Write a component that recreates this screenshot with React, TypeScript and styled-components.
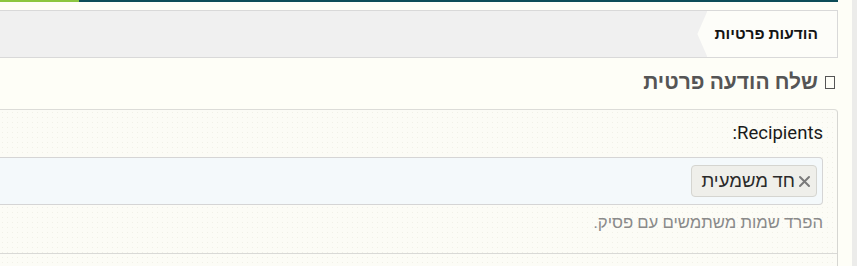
import styled, { createGlobalStyle } from "styled-components";

const GlobalStyle = createGlobalStyle`
  html, body {
    margin: 0;
    padding: 0;
    background: #fefef7;
  }
  body {
    font-family: Roboto, "Liberation Sans", "Noto Sans", sans-serif;
    overflow: hidden;
  }
`;

const Page = styled.div`
  width: 857px;
  height: 266px;
  direction: rtl;
  display: flex;
  overflow: hidden;
`;

const SideStrip = styled.div`
  width: 5px;
  flex: none;
  background: #ececea;
`;

const Main = styled.div`
  width: 838px;
  margin-right: 14px;
  flex: none;
  display: flex;
  flex-direction: column;
`;

const TopBar = styled.div`
  height: 2px;
  display: flex;
  background: #0d4c58;
  direction: ltr;
`;

const TopBarAccent = styled.div`
  width: 79px;
  background: #8cc63f;
`;

const Breadcrumbs = styled.div`
  margin-top: 8px;
  height: 46px;
  background: #f0f0f0;
  border-top: 1px solid #d9d9d9;
  border-bottom: 1px solid #d9d9d9;
  border-right: 1px solid #d9d9d9;
  display: flex;
`;

const Crumb = styled.div`
  position: relative;
  display: flex;
  align-items: center;
  padding: 0 19px 0 7px;
  background: #fdfdf9;
  font-size: 15.5px;
  font-weight: bold;
  color: #141414;

  &::after {
    content: "";
    position: absolute;
    top: 0;
    left: -10px;
    width: 10px;
    height: 100%;
    background: #fdfdf9;
    clip-path: polygon(100% 0, 0 50%, 100% 100%);
  }
`;

const Heading = styled.h1`
  margin: 9px 0 0;
  padding-right: 3px;
  height: 30px;
  display: flex;
  align-items: center;
  gap: 7px;
  font-size: 21px;
  font-weight: bold;
  color: #555555;
`;

const IconBox = styled.span`
  width: 10px;
  height: 13px;
  border: 1px solid #555;
  box-sizing: border-box;
  flex: none;
`;

const Block = styled.div`
  margin-top: 12px;
  flex: 1;
  border-top: 1px solid #dcdcd8;
  border-right: 1px solid #d6d6d2;
  border-top-right-radius: 4px;
  background-color: #fcfcf6;
  background-image: radial-gradient(#f1f1e8 0.6px, transparent 0.8px);
  background-size: 5px 5px;
`;

const FormRow = styled.div`
  padding: 11px 14px 20px 0;
  border-bottom: 1px solid #d9d9d6;
  display: flex;
  flex-direction: column;
`;

const Label = styled.label`
  font-size: 18.5px;
  color: #1a1a1a;
  height: 24px;
  line-height: 24px;
`;

const TokenInput = styled.div`
  margin-top: 12px;
  height: 46px;
  border: 1px solid #d5d5d5;
  border-left: none;
  border-radius: 0 4px 4px 0;
  background: #f4f9fb;
  display: flex;
  align-items: center;
  padding-right: 5px;
`;

const Token = styled.span`
  display: inline-flex;
  align-items: center;
  gap: 3px;
  height: 30px;
  padding: 0 5px 0 9px;
  background: #efefea;
  border: 1px solid #d5d5d0;
  border-radius: 4px;
  font-size: 18.5px;
  color: #2a2a2a;
`;

const Hint = styled.div`
  margin-top: 8px;
  font-size: 16.7px;
  color: #8a8a8a;
`;

function RemoveIcon() {
  return (
    <svg width="13" height="13" viewBox="0 0 13 13">
      <path
        d="M2 2 L11 11 M11 2 L2 11"
        stroke="#7a7a7a"
        strokeWidth="2"
        strokeLinecap="round"
      />
    </svg>
  );
}

export default function App() {
  return (
    <>
      <GlobalStyle />
      <Page>
        <SideStrip />
        <Main>
          <TopBar>
            <TopBarAccent />
          </TopBar>
          <Breadcrumbs>
            <Crumb>הודעות פרטיות</Crumb>
          </Breadcrumbs>
          <Heading>
            <IconBox />
            שלח הודעה פרטית
          </Heading>
          <Block>
            <FormRow>
              <Label>Recipients:</Label>
              <TokenInput>
                <Token>
                  <RemoveIcon />
                  חד משמעית
                </Token>
              </TokenInput>
              <Hint>הפרד שמות משתמשים עם פסיק.</Hint>
            </FormRow>
          </Block>
        </Main>
      </Page>
    </>
  );
}
